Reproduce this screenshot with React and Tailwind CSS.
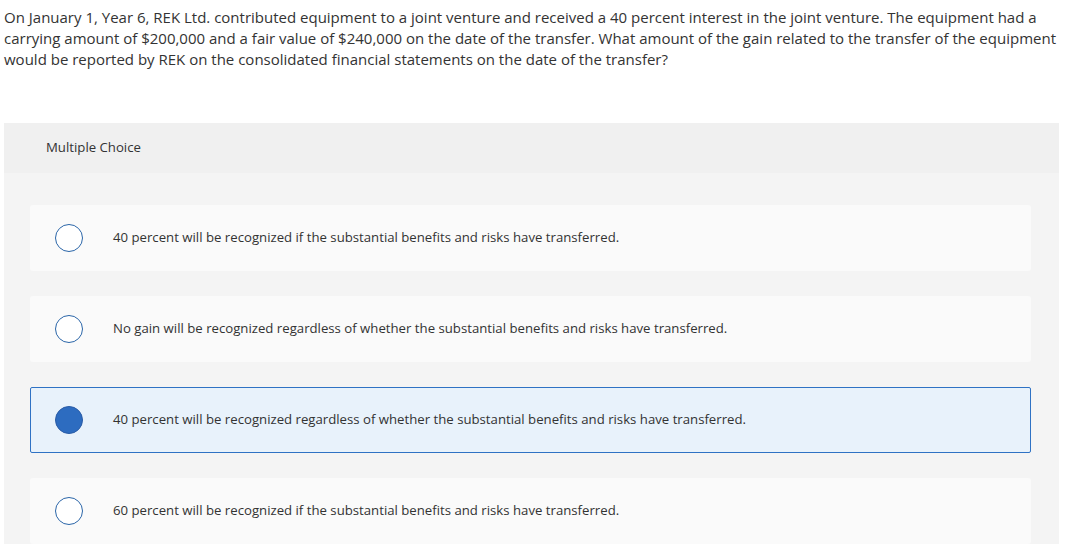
export default function App() {
  const options = [
    { text: "40 percent will be recognized if the substantial benefits and risks have transferred.", selected: false },
    { text: "No gain will be recognized regardless of whether the substantial benefits and risks have transferred.", selected: false },
    { text: "40 percent will be recognized regardless of whether the substantial benefits and risks have transferred.", selected: true },
    { text: "60 percent will be recognized if the substantial benefits and risks have transferred.", selected: false },
  ];
  return (
    <div className="w-[1068px] h-[551px] overflow-hidden bg-white text-[#333]" style={{ fontFamily: '"Open Sans", Lato, sans-serif' }}>
      <p className="px-[4px] pt-[7px] text-[15px] leading-[21px] w-[1064px]">
        On January 1, Year 6, REK Ltd. contributed equipment to a joint venture and received a 40 percent interest in the joint venture. The equipment had a carrying amount of $200,000 and a fair value of $240,000 on the date of the transfer. What amount of the gain related to the transfer of the equipment would be reported by REK on the consolidated financial statements on the date of the transfer?
      </p>
      <div className="mt-[53px] ml-[4px] w-[1055px] bg-[#f4f4f4]">
        <div className="h-[50px] bg-[#f0f0f0] flex items-center pl-[42px] text-[13.2px]">Multiple Choice</div>
        <div className="pt-[32px] pl-[26px] flex flex-col gap-[25px]">
          {options.map((o, i) => (
            <div
              key={i}
              className={
                o.selected
                  ? "w-[1001px] h-[66px] flex items-center rounded-[2px] border border-[#2f72c4] bg-[#e8f2fb]"
                  : "w-[1001px] h-[66px] flex items-center rounded-[3px] border border-transparent bg-[#fafafa]"
              }
            >
              <div
                className={
                  o.selected
                    ? "ml-[24px] w-[28px] h-[28px] rounded-full bg-[#2d6cc0] border border-[#2a5ca6]"
                    : "ml-[24px] w-[28px] h-[28px] rounded-full bg-white border-[1.5px] border-[#2a65a8]"
                }
              />
              <span className="ml-[30px] text-[13.2px]">{o.text}</span>
            </div>
          ))}
        </div>
      </div>
    </div>
  );
}
